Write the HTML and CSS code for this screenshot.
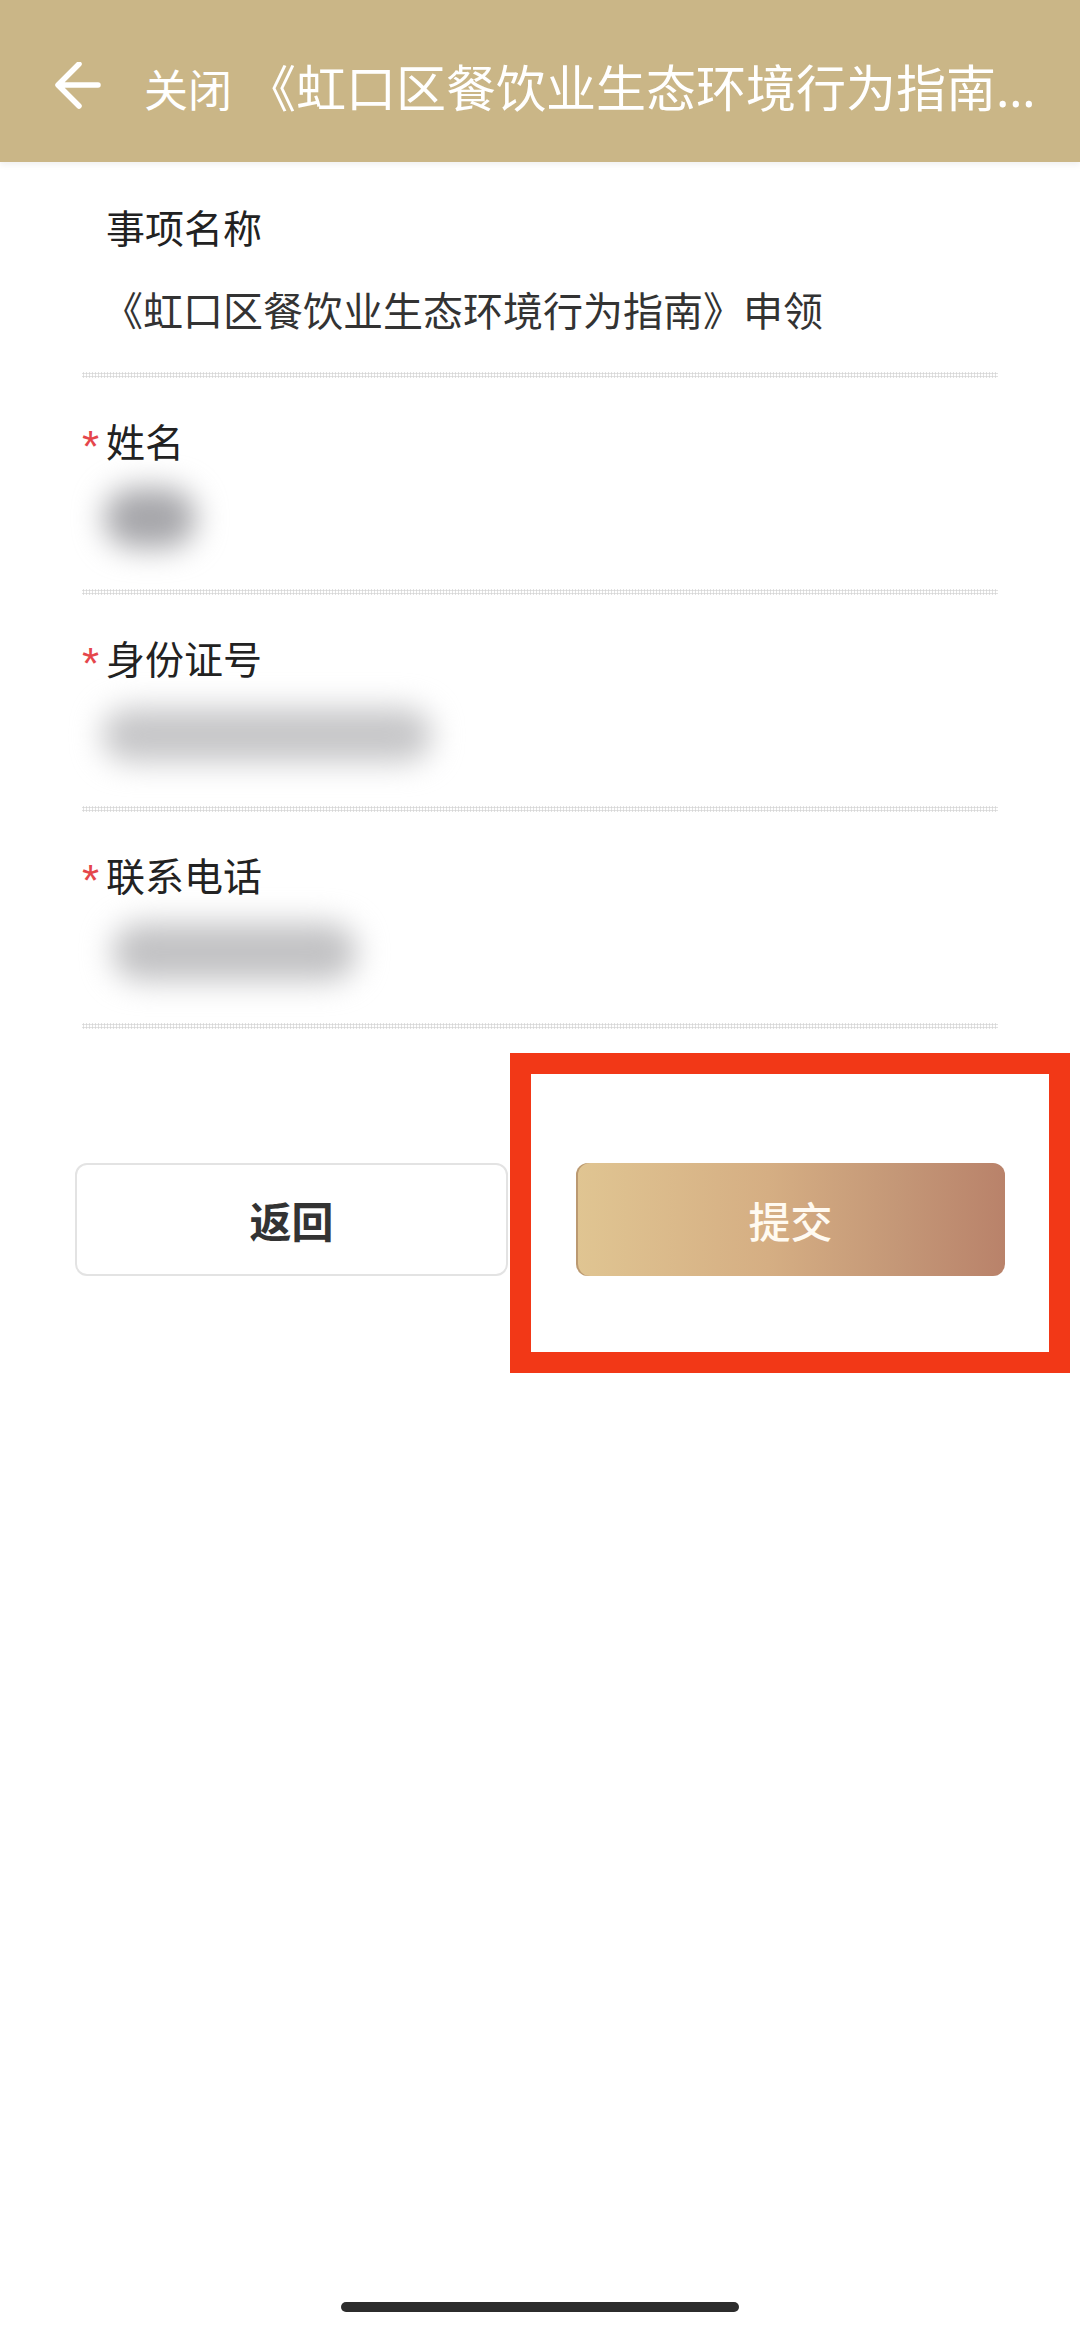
FILE: index.html
```html
<!DOCTYPE html>
<html lang="zh-CN">
<head>
<meta charset="utf-8">
<title>申领</title>
<link rel="stylesheet" href="styles.css">
</head>
<body>
<header class="topbar">
  <svg class="back" viewBox="0 0 48 48" width="48" height="48" aria-hidden="true">
    <path d="M44 23H6M25 2 4 23l21 21" fill="none" stroke="#fff" stroke-width="5.5" stroke-linecap="round" stroke-linejoin="round"/>
  </svg>
  <span class="close">关闭</span>
  <span class="title">《虹口区餐饮业生态环境行为指南》申领</span>
</header>

<main class="form">
  <section class="field field-first">
    <div class="label"><span class="star"></span>事项名称</div>
    <div class="value"><span class="value-text">《虹口区餐饮业生态环境行为指南》申领</span></div>
  </section>
  <div class="divider"></div>

  <section class="field">
    <div class="label"><span class="star">*</span>姓名</div>
    <div class="value"><span class="blur blur-name"></span></div>
  </section>
  <div class="divider"></div>

  <section class="field">
    <div class="label"><span class="star">*</span>身份证号</div>
    <div class="value"><span class="blur blur-id"></span></div>
  </section>
  <div class="divider"></div>

  <section class="field">
    <div class="label"><span class="star">*</span>联系电话</div>
    <div class="value"><span class="blur blur-phone"></span></div>
  </section>
  <div class="divider"></div>
</main>

<div class="actions">
  <button class="btn btn-back" type="button">返回</button>
  <button class="btn btn-submit" type="button">提交</button>
</div>

<div class="highlight"></div>
<div class="home-indicator"></div>
</body>
</html>
```

FILE: styles.css
```css
* { box-sizing: border-box; }

html, body {
  margin: 0;
  padding: 0;
  background: #ffffff;
}

body {
  position: relative;
  width: 1080px;
  height: 2329px;
  overflow: hidden;
  font-family: "Noto Sans CJK SC", "Noto Sans", sans-serif;
  color: #222222;
}

/* ---------- top bar ---------- */
.topbar {
  height: 162px;
  background: #cab687;
  display: flex;
  align-items: center;
  padding: 14px 20px 0 54px;
  box-shadow: 0 3px 6px rgba(0, 0, 0, 0.06);
  color: #ffffff;
}

.back {
  flex: none;
  margin-bottom: 4px;
}

.close {
  flex: none;
  margin-left: 42px;
  font-size: 44px;
  line-height: 1.2;
  font-weight: 400;
}

.title {
  flex: 1;
  min-width: 0;
  margin-left: 14px;
  font-family: "Noto Sans", "Noto Sans CJK SC", sans-serif;
  font-size: 50px;
  line-height: 1.2;
  font-weight: 400;
  white-space: nowrap;
  overflow: hidden;
  text-overflow: ellipsis;
}

/* ---------- form ---------- */
.form {
  padding: 0 82px;
}

.field {
  padding-top: 34px;
  padding-bottom: 21px;
}

.field-first {
  padding-top: 36px;
  padding-bottom: 18px;
}

.label {
  height: 56px;
  display: flex;
  align-items: center;
  font-size: 39px;
  color: #222222;
}

.star {
  flex: none;
  width: 24px;
  margin-top: 13px;
  font-family: "Liberation Sans", sans-serif;
  font-size: 44px;
  line-height: 1;
  color: #e5464b;
}

.value {
  height: 100px;
  display: flex;
  align-items: center;
}

.field-first .value {
  padding-top: 10px;
}

.value-text {
  margin-left: 21px;
  font-size: 40px;
  color: #333333;
  white-space: nowrap;
}

.blur {
  display: block;
  border-radius: 30px;
  filter: blur(15px);
}

.blur-name {
  width: 92px;
  height: 60px;
  margin-left: 22px;
  background: #a6a6aa;
}

.blur-id {
  width: 330px;
  height: 54px;
  margin-left: 20px;
  background: #c6c6c8;
}

.blur-phone {
  width: 245px;
  height: 58px;
  margin-left: 30px;
  background: #c2c2c4;
}

.divider {
  height: 6px;
  background-image: radial-gradient(circle, #d6d6d6 0.9px, transparent 1.3px);
  background-size: 3px 3px;
}

/* ---------- buttons ---------- */
.actions {
  display: flex;
  gap: 68px;
  padding: 0 75px;
  margin-top: 134px;
}

.btn {
  flex: 1;
  height: 113px;
  border-radius: 12px;
  font-family: "Noto Sans CJK SC", sans-serif;
  font-size: 42px;
  cursor: pointer;
}

.btn-back {
  background: #ffffff;
  border: 2px solid #e3e3e3;
  color: #333333;
  font-weight: 700;
}

.btn-submit {
  border: none;
  color: #fffaf1;
  font-weight: 500;
  background: linear-gradient(90deg, #e0c592 0%, #d5ae83 45%, #c49777 75%, #b9826a 100%);
  box-shadow: inset 2px 0 0 rgba(150, 110, 80, 0.5);
}

/* ---------- overlays ---------- */
.highlight {
  position: absolute;
  left: 510px;
  top: 1053px;
  width: 560px;
  height: 320px;
  border: 21px solid #f23817;
}

.home-indicator {
  position: absolute;
  left: 341px;
  top: 2302px;
  width: 398px;
  height: 10px;
  border-radius: 5px;
  background: #2c2c2c;
}
```
